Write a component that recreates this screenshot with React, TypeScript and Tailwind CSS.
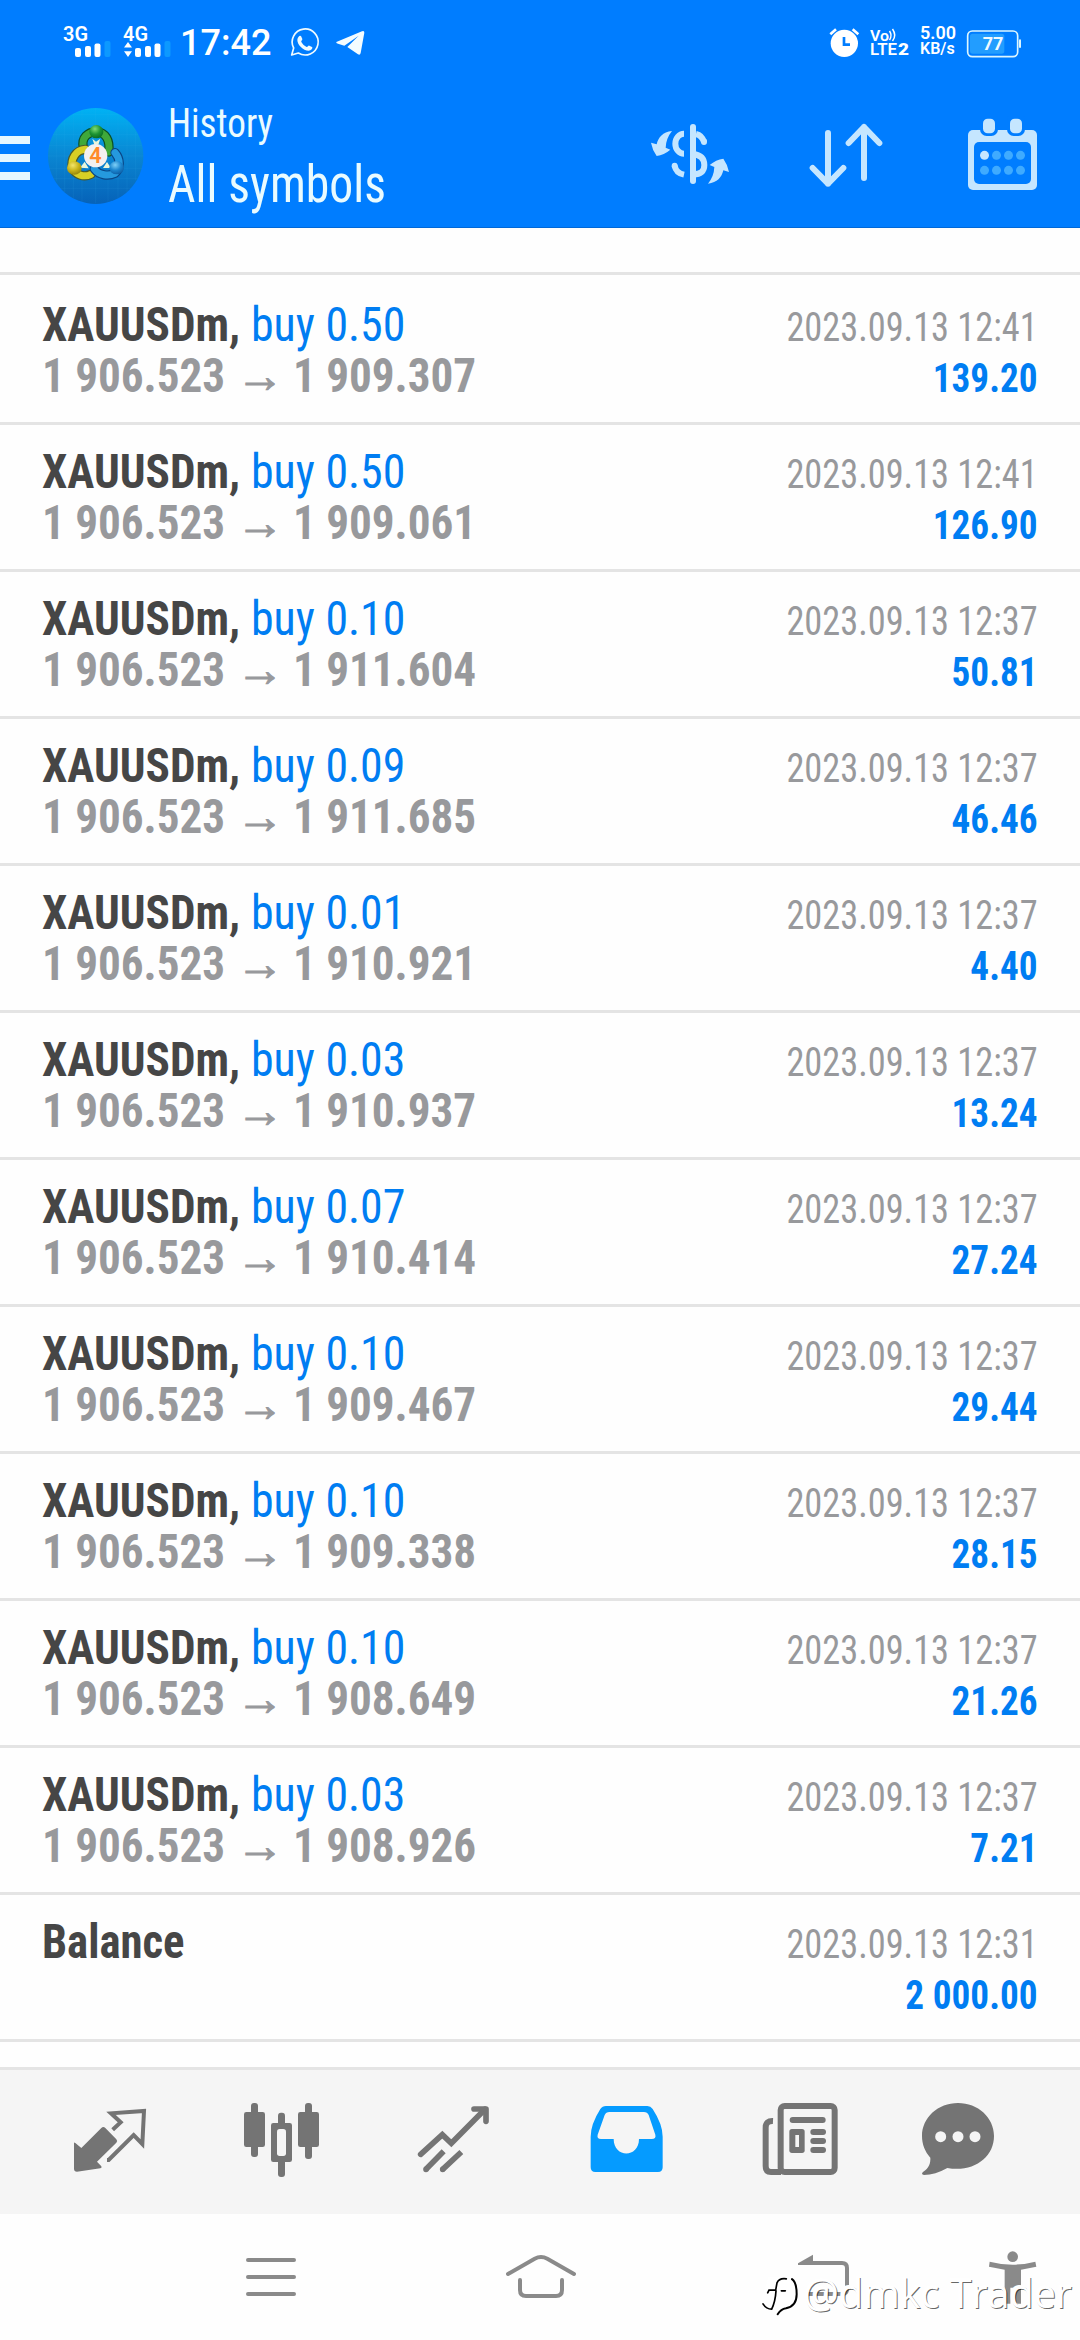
type Deal = { volume: string; close: string; time: string; profit: string };

const deals: Deal[] = [
  { volume: "0.50", close: "1 909.307", time: "2023.09.13 12:41", profit: "139.20" },
  { volume: "0.50", close: "1 909.061", time: "2023.09.13 12:41", profit: "126.90" },
  { volume: "0.10", close: "1 911.604", time: "2023.09.13 12:37", profit: "50.81" },
  { volume: "0.09", close: "1 911.685", time: "2023.09.13 12:37", profit: "46.46" },
  { volume: "0.01", close: "1 910.921", time: "2023.09.13 12:37", profit: "4.40" },
  { volume: "0.03", close: "1 910.937", time: "2023.09.13 12:37", profit: "13.24" },
  { volume: "0.07", close: "1 910.414", time: "2023.09.13 12:37", profit: "27.24" },
  { volume: "0.10", close: "1 909.467", time: "2023.09.13 12:37", profit: "29.44" },
  { volume: "0.10", close: "1 909.338", time: "2023.09.13 12:37", profit: "28.15" },
  { volume: "0.10", close: "1 908.649", time: "2023.09.13 12:37", profit: "21.26" },
  { volume: "0.03", close: "1 908.926", time: "2023.09.13 12:37", profit: "7.21" },
];

function Signal({ label, data }: { label: string; data?: boolean }) {
  return (
    <svg viewBox="0 0 50 34" className="h-[34px] w-[50px]" fill="#fff">
      <text x="0" y="17" fontSize="19.5" fontWeight="600" textLength="25" lengthAdjust="spacingAndGlyphs">
        {label}
      </text>
      {data && <path d="M1 23.5 5 18l4 5.5zM1 27.2h8L5 33z" />}
      <rect x="12" y="24" width="6" height="9" rx="2" />
      <rect x="22" y="22" width="6" height="11" rx="2" />
      <rect x="31.500" y="19.500" width="6" height="13.500" rx="2" />
      <rect x="41.500" y="17" width="6" height="16" rx="2" fill="#0d99ff" />
    </svg>
  );
}

function StatusBar() {
  return (
    <div className="flex h-[76px] shrink-0 items-start pt-[24px] pr-[58px] pl-[63px] text-white [font-family:Roboto,sans-serif]">
      <Signal label="3G" />
      <div className="ml-[10px]">
        <Signal label="4G" data />
      </div>
      <span className="ml-[7px] w-[91px] text-[36px] leading-[39px] font-medium">17:42</span>
      <svg viewBox="870 78 96 96" className="mt-[2px] ml-[18px] h-[32px] w-[32px]" fill="none" stroke="#f0fbff">
        <path d="M878 165l6-21a39 39 0 1 1 14 15z" strokeWidth="5" strokeLinejoin="round" />
        <path
          d="M901 108c4-3 6 0 9 9 1 4-5 5-3 9 4 7 9 12 16 15 3 1 5-6 8-4l8 4c4 3-3 11-10 11-17 0-34-18-34-32 0-5 3-9 6-12z"
          fill="#f0fbff"
          stroke="none"
        />
      </svg>
      <svg viewBox="1008 78 96 96" className="mt-[2px] ml-[14px] h-[32px] w-[32px]" fill="#f4fcff">
        <path d="M1012 126q-2 4 5 5l19 6 43-30-34 34 32 22q6 4 8-4l11-61q0-7-7-4z" />
      </svg>
      <div className="flex-1" />
      <svg viewBox="560 78 96 96" className="mt-[2px] h-[32px] w-[32px]" fill="none" stroke="#fff">
        <circle cx="609" cy="130" r="41" fill="#fff" stroke="none" />
        <path d="M567 103l17-15M651 103l-17-15" strokeWidth="8" />
        <path d="M608 111v23h18" stroke="#007dff" strokeWidth="8" />
      </svg>
      <svg viewBox="0 0 40 34" className="ml-[10px] h-[34px] w-[40px]" fill="#fff">
        <text x="0" y="16.5" fontSize="15" fontWeight="600" textLength="19" lengthAdjust="spacingAndGlyphs">
          Vo
        </text>
        <path d="M19.500 7q3 4.500 0 9M22.500 5q4.500 6.500 0 12" fill="none" stroke="#fff" strokeWidth="1.500" />
        <text x="0" y="31" fontSize="16.500" fontWeight="600" textLength="27" lengthAdjust="spacingAndGlyphs">
          LTE
        </text>
        <text x="28" y="31" fontSize="16.500" fontWeight="900" textLength="11" lengthAdjust="spacingAndGlyphs">
          2
        </text>
      </svg>
      <div className="ml-[10px] w-[36px] pt-px leading-[16px] font-semibold">
        <div className="text-[18px]">5.00</div>
        <div className="text-[16px] whitespace-nowrap">KB/s</div>
      </div>
      <svg viewBox="975 86 168 90" className="mt-[4.500px] ml-[10px] h-[30px] w-[56px]">
        <rect x="980" y="92" width="150" height="77" rx="14" fill="none" stroke="#dcf6ff" strokeWidth="5" />
        <path d="M1137 120v20" stroke="#dcf6ff" strokeWidth="6" strokeLinecap="round" />
        <rect x="987" y="100" width="103" height="60" rx="8" fill="#229dff" />
        <text x="1056" y="150" fontSize="54" fontWeight="700" textAnchor="middle" fill="#f0faff">
          77
        </text>
      </svg>
    </div>
  );
}

function Logo() {
  return (
    <svg viewBox="22 18 294 294" className="h-[98px] w-[98px]">
      <defs>
        <linearGradient id="disc" x1="0" y1="0" x2="0" y2="1">
          <stop offset="0" stopColor="#00b2f4" />
          <stop offset="0.5" stopColor="#0a86d2" />
          <stop offset="1" stopColor="#0662b8" />
        </linearGradient>
        <radialGradient id="green" cx="0.4" cy="0.3" r="0.8">
          <stop offset="0" stopColor="#7fdc74" />
          <stop offset="0.5" stopColor="#1d9434" />
          <stop offset="1" stopColor="#06601c" />
        </radialGradient>
        <radialGradient id="yellow" cx="0.4" cy="0.3" r="0.8">
          <stop offset="0" stopColor="#f2e56a" />
          <stop offset="0.5" stopColor="#c8b41a" />
          <stop offset="1" stopColor="#8a7a0a" />
        </radialGradient>
        <radialGradient id="blue" cx="0.4" cy="0.3" r="0.8">
          <stop offset="0" stopColor="#7fd0f7" />
          <stop offset="0.5" stopColor="#1b86cf" />
          <stop offset="1" stopColor="#0a559c" />
        </radialGradient>
      </defs>
      <ellipse cx="168" cy="168" rx="143" ry="144" fill="url(#disc)" />
      <path
        d="M50 92v152M75 60v216M101 42v252M127 30v276M168 25v286M205 30v276M235 42v252M262 60v216M288 95v146M100 44h136M60 72h216M40 104h256M28 136h280M25 168h286M28 205h280M42 236h252M62 265h212"
        stroke="#3fb4ee"
        strokeOpacity="0.16"
        strokeWidth="2"
      />
      <g fill="none" strokeLinecap="round">
        <path d="M131 144C124 112 145 96 170 95c28 2 42 26 37 61" stroke="#0b4f26" strokeWidth="28" />
        <path d="M131 144C124 112 145 96 170 95c28 2 42 26 37 61" stroke="#3fa83a" strokeWidth="21" />
        <path d="M137 148c-30 2-44 30-39 55 10 23 35 30 56 20" stroke="#4b5a2b" strokeWidth="28" />
        <path d="M137 148c-30 2-44 30-39 55 10 23 35 30 56 20" stroke="#d8cf25" strokeWidth="21" />
        <path d="M164 207c15 20 43 22 62 13 18-15 16-44 0-62" stroke="#0a4686" strokeWidth="28" />
        <path d="M164 207c15 20 43 22 62 13 18-15 16-44 0-62" stroke="#2599de" strokeWidth="21" />
      </g>
      <path d="M158 116l11 9 13-9-6 18h-12zM121 203l14-18 12 20zM190 204l12-18 12 18z" fill="#e8f5dc" />
      <ellipse cx="170" cy="95" rx="21" ry="20" fill="url(#green)" />
      <ellipse cx="104" cy="204" rx="22" ry="20" fill="url(#yellow)" />
      <ellipse cx="231" cy="203" rx="22" ry="20" fill="url(#blue)" />
      <circle cx="168" cy="167" r="35" fill="#f3f0f0" />
      <text x="167" y="189" textAnchor="middle" fontFamily="Roboto" fontSize="65" fontWeight="600" fill="#ff8a2a">
        4
      </text>
    </svg>
  );
}

function Header() {
  return (
    <header className="flex h-[228px] shrink-0 flex-col border-b border-[#0068d8] bg-[#007dff]">
      <StatusBar />
      <div className="flex flex-1 items-start">
        <div className="mt-[60px] flex w-[30px] flex-col gap-[10px]">
          <div className="h-[8px] bg-[#e6f7ff]" />
          <div className="h-[8px] bg-[#e6f7ff]" />
          <div className="h-[8px] bg-[#e6f7ff]" />
        </div>
        <div className="mt-[30px] ml-[17px]">
          <Logo />
        </div>
        <div className="mt-[23px] ml-[23px] flex-1 whitespace-nowrap text-[#e9fbff]">
          <div className="origin-left scale-x-[0.93] text-[40px] leading-[50px]">History</div>
          <div className="origin-left scale-x-[0.935] text-[51px] leading-[72px]">All symbols</div>
        </div>
        <svg viewBox="30 345 240 240" className="mt-[39px] h-[80px] w-[80px]" fill="none" stroke="#c5e6ff" strokeWidth="18">
          <path d="M159 381v162" strokeLinecap="round" />
          <path d="M132 401a26 30 0 0 0 0 60M168 402q18 4 24 24" />
          <path d="M104 497q4 22 28 27" />
          <path d="M192 424v2M104 497v1" strokeLinecap="round" />
          <path d="M159 462q34 4 34 33t-34 28" />
          <g fill="#c5e6ff" stroke="none">
            <path d="M96 393C68 396 55 412 50 433L33 428Q37 450 50 468 72 465 91 449L77 443Q78 415 96 393z" />
            <path d="M204 551C232 548 245 532 250 511L267 516Q263 494 250 476 228 479 209 495L223 501Q222 529 204 551z" />
          </g>
        </svg>
        <svg
          viewBox="498 345 240 240"
          className="mt-[39px] ml-[76px] h-[80px] w-[80px]"
          fill="none"
          stroke="#c5e6ff"
          strokeWidth="18"
          strokeLinecap="round"
          strokeLinejoin="round"
        >
          <path d="M564 399v152M518 504l46 47 46-47M672 534V381M626 429l46-48 46 48" />
        </svg>
        <svg viewBox="984 345 207 240" className="mt-[39px] mr-[43px] ml-[82px] h-[80px] w-[69px]">
          <rect x="984" y="390" width="207" height="180" rx="15" fill="#c5e6ff" />
          <rect x="1020" y="340" width="54" height="68" rx="20" fill="#007dff" />
          <rect x="1101" y="340" width="54" height="68" rx="20" fill="#007dff" />
          <rect x="1002" y="426" width="171" height="126" rx="15" fill="#007dff" />
          <rect x="1029" y="356" width="36" height="44" rx="14" fill="#c5e6ff" />
          <rect x="1110" y="356" width="36" height="44" rx="14" fill="#c5e6ff" />
          <g fill="#3fabff">
            <circle cx="1033.500" cy="466" r="13.500" fill="#c5e6ff" />
            <circle cx="1069.500" cy="466" r="13.500" />
            <circle cx="1105.500" cy="466" r="13.500" />
            <circle cx="1141.500" cy="466" r="13.500" />
            <circle cx="1033.500" cy="511" r="13.500" />
            <circle cx="1069.500" cy="511" r="13.500" />
            <circle cx="1105.500" cy="511" r="13.500" />
            <circle cx="1141.500" cy="511" r="13.500" />
          </g>
        </svg>
      </div>
    </header>
  );
}

function RightColumn({ time, amount }: { time: string; amount: string }) {
  return (
    <div className="text-right text-[40px] leading-[51px] whitespace-nowrap">
      <div className="origin-right scale-x-[0.908] text-[#98999c]">{time}</div>
      <div className="origin-right scale-x-[0.93] font-bold text-[#007df2]">{amount}</div>
    </div>
  );
}

function DealRow({ deal }: { deal: Deal }) {
  return (
    <div className="flex h-[147px] items-baseline justify-between border-b-[3px] border-[#e4e4e4] px-[42px] pt-[21px]">
      <div className="text-[48px] leading-[51px] whitespace-nowrap">
        <div className="flex">
          <span className="w-[209px] origin-left scale-x-[0.942] font-bold text-[#464646]">XAUUSDm,</span>
          <span className="origin-left scale-x-[0.955] text-[#007df2]">buy {deal.volume}</span>
        </div>
        <div className="flex font-bold text-[#98999c]">
          <span className="w-[194px] origin-left scale-x-[0.94]">1 906.523</span>
          <span className="w-[57px] [font-family:'Liberation_Sans',sans-serif] [-webkit-text-stroke:1px_#98999c]">→</span>
          <span className="origin-left scale-x-[0.94]">{deal.close}</span>
        </div>
      </div>
      <RightColumn time={deal.time} amount={deal.profit} />
    </div>
  );
}

function TabBar() {
  return (
    <nav className="flex h-[147px] shrink-0 border-t-[3px] border-[#e4e4e4] bg-[#f5f5f5] pl-[24px]">
      <svg viewBox="-78 -60 516 432" className="h-[144px] w-[172px]" fill="#747474">
        <path d="M72 160q0-4 4-1l18 15 60-60q6-6 12 0l33 34q5 5 0 10l-58 57 13 14q3 5-3 6l-70 10q-9 0-9-9z" />
        <path
          d="M188 119l24-22-29-27 99-7-5 99-26-27-75 75h-5"
          fill="none"
          stroke="#747474"
          strokeWidth="12"
        />
      </svg>
      <svg viewBox="438 -60 516 432" className="h-[144px] w-[172px]" fill="#747474">
        <rect x="603" y="39" width="21" height="162" rx="9" />
        <rect x="582" y="66" width="63" height="105" rx="7" />
        <rect x="765" y="39" width="21" height="168" rx="9" />
        <rect x="744" y="66" width="63" height="105" rx="7" />
        <rect x="684" y="68" width="21" height="193" rx="9" />
        <rect x="663" y="99" width="63" height="117" rx="7" />
        <rect x="681" y="117" width="27" height="81" rx="8" fill="#f5f5f5" />
      </svg>
      <svg viewBox="954 -60 516 432" className="h-[144px] w-[172px]" fill="none" stroke="#747474" strokeWidth="17">
        <path d="M1112 193l65-59 27 26 101-102" strokeLinecap="round" />
        <path d="M1272 57h36v37" strokeLinecap="round" strokeLinejoin="round" />
        <path d="M1128 238l53-54M1178 238l56-52" />
        <path d="M1128 238v.1M1178 238v.1" strokeLinecap="round" />
      </svg>
      <svg viewBox="120 -60 516 432" className="h-[144px] w-[172px]" fill="#059bff">
        <path
          fillRule="evenodd"
          d="M318 48H442Q452 48 458 57 488 103 488 140V232Q488 246 474 246H286Q272 246 272 232V140Q272 103 301 57 307 48 318 48zM328 66Q318 66 314 75L293 134Q290 147 303 147H341C341 205 417 205 417 147H455Q469 147 466 134L446 75Q442 66 432 66z"
        />
      </svg>
      <svg viewBox="636 -60 516 432" className="h-[144px] w-[172px]" fill="#747474">
        <rect x="842" y="48" width="162" height="198" rx="12" fill="none" stroke="#747474" strokeWidth="18" />
        <path d="M819 93q-22-1-22 20v115q0 18 16 18h30" fill="none" stroke="#747474" strokeWidth="18" />
        <rect x="869" y="81" width="108" height="18" rx="9" />
        <rect x="868" y="117" width="46" height="72" rx="8" />
        <rect x="886" y="135" width="11" height="36" fill="#f5f5f5" />
        <rect x="931" y="117" width="47" height="18" rx="9" />
        <rect x="931" y="144" width="47" height="18" rx="9" />
        <rect x="931" y="171" width="47" height="18" rx="9" />
      </svg>
      <svg viewBox="432 -30 516 432" className="h-[144px] w-[172px]" fill="#747474">
        <path d="M654 69c60 0 108 44 108 99 0 65-62 110-140 96-24 14-48 21-70 21q-10-2-3-9c18-12 23-26 22-43-16-18-25-40-25-65 0-55 48-99 108-99z" />
        <circle cx="602" cy="170" r="16.500" fill="#f5f5f5" />
        <circle cx="654" cy="170" r="16.500" fill="#f5f5f5" />
        <circle cx="705" cy="170" r="16.500" fill="#f5f5f5" />
      </svg>
    </nav>
  );
}

function Watermark() {
  return (
    <div className="absolute right-[8px] bottom-[22px] flex items-center text-white">
      <svg viewBox="64 540 138 140" className="h-[47px] w-[46px]" fill="none" strokeLinecap="round">
        <path d="M96 560h66q18 4 18 40 0 50-40 52l-18 20-25-16-28-12z" fill="#fff" />
        <path d="M149 566q-22-3-28 12l-4 22h-20l-4 8M118 602q-2 32-13 55M105 657q-16 0-26-16" stroke="#000" strokeWidth="5" />
        <path d="M134 602h12" stroke="#000" strokeWidth="5" />
        <path d="M166 567q14 10 14 45 0 36-32 42-15 2-25 18" stroke="#000" strokeWidth="6" />
      </svg>
      <span className="text-[39.500px] leading-[50px] whitespace-nowrap [font-family:'Open_Sans',sans-serif] [text-shadow:1px_1px_0_rgba(0,0,0,0.6),-1px_-1px_0_#fff]">
        @dmkc Trader
      </span>
    </div>
  );
}

function SystemNav() {
  return (
    <div className="relative flex h-[126px] shrink-0 bg-[#fefefe] pl-[136px]">
      <svg viewBox="258 372 810 378" className="h-[126px] w-[270px]" stroke="#8a8a8a" strokeWidth="12" strokeLinecap="round">
        <path d="M594 510h138M594 561h138M594 612h138" />
      </svg>
      <svg
        viewBox="-282 372 810 378"
        className="h-[126px] w-[270px]"
        fill="none"
        stroke="#8a8a8a"
        strokeWidth="12"
        strokeLinecap="round"
      >
        <path d="M24 552l80-46q19-10 38 0l80 46M60 570v30q0 18 18 18h90q18 0 18-18v-30" />
      </svg>
      <svg viewBox="528 372 810 378" className="h-[126px] w-[270px]" fill="none" stroke="#8a8a8a" strokeWidth="12">
        <path d="M930 519h96q15 0 15 15v64q0 14-15 14H918" />
        <path d="M894 520l45-26v31h-45z" fill="#8a8a8a" stroke="none" />
      </svg>
      <svg viewBox="618 402 402 378" className="h-[126px] w-[134px]" fill="#8a8a8a">
        <circle cx="818" cy="530" r="16" />
        <path d="M749 545q69 18 137 0l3 15-46 9v102h-18v-48h-14v48h-17V569l-47-9z" />
      </svg>
      <Watermark />
    </div>
  );
}

export default function App() {
  return (
    <div className="flex h-[2340px] w-[1080px] flex-col overflow-hidden bg-[#fefefe] [font-family:'Roboto_Condensed',Roboto,sans-serif]">
      <Header />
      <main className="flex-1 pt-[44px]">
        <div className="border-t-[3px] border-[#e4e4e4] pt-[3px]">
          {deals.map((deal) => (
            <DealRow key={deal.close} deal={deal} />
          ))}
          <div className="flex h-[147px] items-baseline justify-between border-b-[3px] border-[#e4e4e4] px-[42px] pt-[21px]">
            <div className="origin-left scale-x-[0.932] text-[48px] leading-[51px] font-bold text-[#464646]">Balance</div>
            <RightColumn time="2023.09.13 12:31" amount="2 000.00" />
          </div>
        </div>
      </main>
      <TabBar />
      <SystemNav />
    </div>
  );
}
